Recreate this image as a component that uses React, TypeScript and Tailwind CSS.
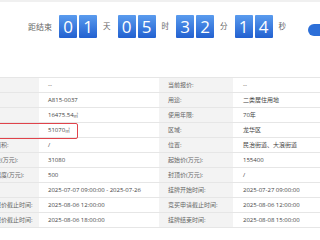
import React from "react";

const font = "font-['Open_Sans','Noto_Sans_CJK_SC',sans-serif]";

function Digit({ d }: { d: string }) {
  return (
    <div className="w-[18px] h-[23px] rounded-[1px] bg-linear-to-b from-[#5a9bee] to-[#2260d0] flex items-center justify-center text-white text-[17px] leading-none">
      {d}
    </div>
  );
}

function Pair({ v }: { v: string }) {
  return (
    <div className="flex gap-[2px]">
      <Digit d={v[0]} />
      <Digit d={v[1]} />
    </div>
  );
}

function Unit({ t }: { t: string }) {
  return <span className="ml-[6px] mr-[7px] w-[8px] text-[7.5px] text-[#666] leading-none">{t}</span>;
}

const Sqm = () => <span className="text-[4.5px] font-['Noto_Sans_CJK_SC',sans-serif]">㎡</span>;

const rows: [string, React.ReactNode, string, string][] = [
  ["状态:", "--", "当前报价:", "--"],
  ["编号:", "A815-0037", "用途:", "二类居住用地"],
  ["面积:", <>16475.54<Sqm /></>, "使用年限:", "70年"],
  ["面积:", <>51070<Sqm /></>, "区域:", "龙华区"],
  ["规划建筑面积:", "/", "位置:", "民治街道、大浪街道"],
  ["挂牌保证金(万元):", "31080", "起始价(万元):", "155400"],
  ["最小增价幅度(万元):", "500", "封顶价(万元):", "/"],
  ["挂牌时间:", "2025-07-07 09:00:00 - 2025-07-26", "挂牌开始时间:", "2025-07-27 09:00:00"],
  ["限时竞价报价截止时间:", "2025-08-06 12:00:00", "竞买申请截止时间:", "2025-08-06 12:00:00"],
  ["自由竞价报价截止时间:", "2025-08-06 18:00:00", "挂牌结束时间:", "2025-08-08 15:00:00"],
];

export default function App() {
  return (
    <div className={`w-[320px] h-[240px] bg-white overflow-hidden ${font}`}>
      <div className="h-[2px] bg-[#f0f0f0]" />
      <div className="flex items-center pt-[13px] pl-[28px] whitespace-nowrap">
        <span className="text-[8px] text-[#666] mr-[7px] leading-none">距结束</span>
        <Pair v="01" />
        <Unit t="天" />
        <Pair v="05" />
        <Unit t="时" />
        <Pair v="32" />
        <Unit t="分" />
        <Pair v="14" />
        <Unit t="秒" />
        <div className="ml-[15px] mt-[6px] w-[30px] h-[12px] shrink-0 rounded-l-full bg-[#2c6fd8]" />
      </div>
      <div className="mt-[39px] ml-[-35px] w-[400px] border-t border-[#e6e6e6] grid grid-cols-[74px_120px_74px_120px] text-[6px] leading-none whitespace-nowrap">
        {rows.map((r, i) => (
          <React.Fragment key={i}>
            <div className="relative h-[15px] bg-[#f3f3f3] border-b border-[#e6e6e6] flex items-center pl-[6px] text-[#666]">
              {r[0]}
              {i === 3 && (
                <div className="absolute left-[-4px] top-[0px] w-[117px] h-[16px] rounded-[2px] border border-[#e0434b] z-10" />
              )}
            </div>
            <div className="h-[15px] bg-white border-b border-[#e6e6e6] flex items-center pl-[9px] text-[#444]">{r[1]}</div>
            <div className="h-[15px] bg-[#f3f3f3] border-b border-[#e6e6e6] flex items-center pl-[9px] text-[#666]">{r[2]}</div>
            <div className="h-[15px] bg-white border-b border-[#e6e6e6] flex items-center pl-[10px] text-[#444]">{r[3]}</div>
          </React.Fragment>
        ))}
      </div>
    </div>
  );
}
